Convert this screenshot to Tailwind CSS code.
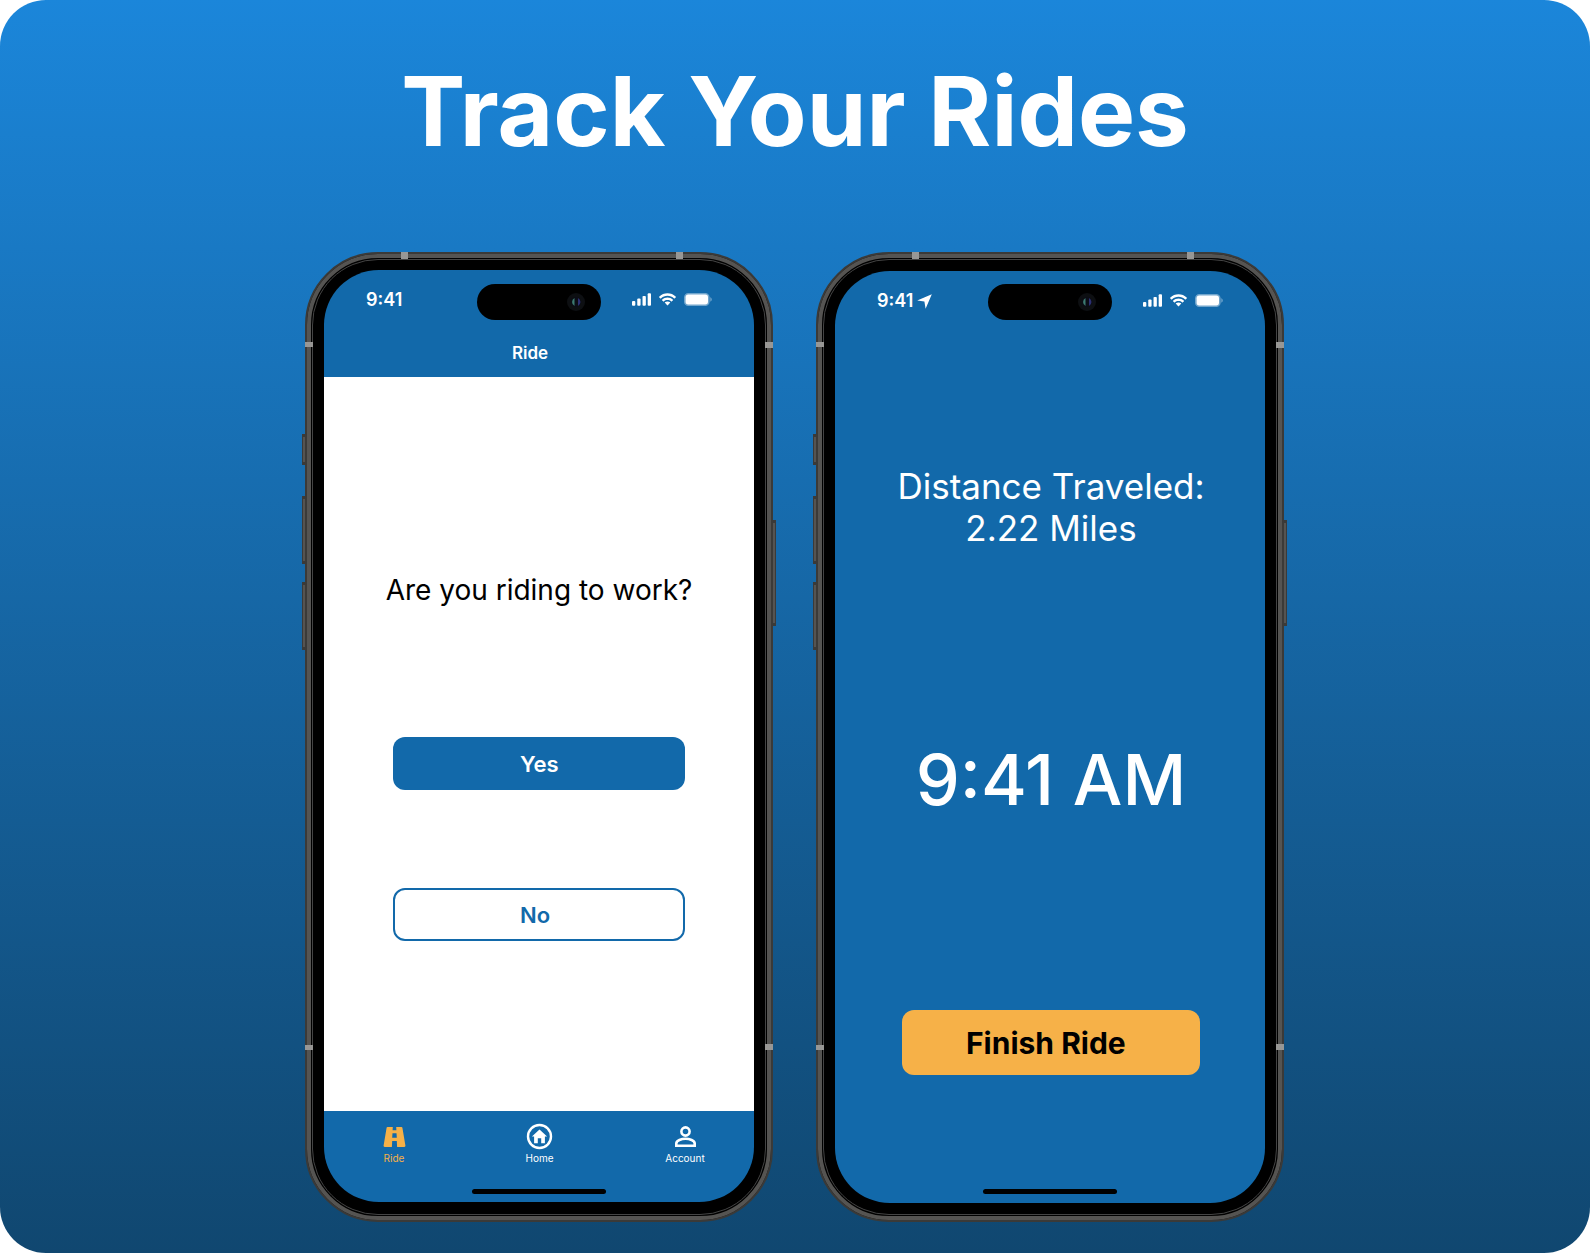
<!DOCTYPE html>
<html lang="en">
<head>
<meta charset="utf-8">
<meta name="viewport" content="width=device-width, initial-scale=1">
<title>Track Your Rides</title>
<script src="https://cdn.jsdelivr.net/npm/@tailwindcss/browser@4"></script>
</head>
<body class="bg-white font-['Inter',sans-serif]">
<svg class="hidden" aria-hidden="true">
  <symbol id="signal" viewBox="0 0 19.5 13">
    <rect x="0" y="8" width="3.4" height="4.800" rx="1"/><rect x="5.400" y="5.400" width="3.400" height="7.400" rx="1"/><rect x="10.800" y="2.800" width="3.400" height="10" rx="1"/><rect x="16.100" y="0" width="3.400" height="12.800" rx="1"/>
  </symbol>
  <symbol id="wifi" viewBox="0 0 17 12.5">
    <path d="M8.5 2.6c2.5 0 4.8.9 6.6 2.6.1.1.3.1.5 0l1.3-1.3c.2-.2.2-.4 0-.5C12.200-1.1 4.800-1.100.100 3.400c-.1.1-.1.3 0 .5l1.300 1.300c.1.1.300.1.500 0C3.700 3.500 6.000 2.600 8.500 2.600zM8.500 6.800c1.400 0 2.700.5 3.700 1.400.1.100.300.100.5 0l1.300-1.300c.1-.1.100-.4 0-.5-3.100-2.900-7.900-2.900-11 0-.1.100-.1.400 0 .5l1.300 1.300c.2.100.4.100.5 0 1-.9 2.300-1.400 3.700-1.400zM11.100 9.600c.100-.1.100-.3 0-.5-1.500-1.300-3.700-1.300-5.200 0-.1.200-.1.400 0 .5l2.300 2.500c.1.100.4.100.600 0z"/>
  </symbol>
  <symbol id="battery" viewBox="0 0 28 13">
    <path opacity=".4" d="M4.300 0h17a4.300 4.300 0 0 1 4.300 4.300v4.400a4.300 4.300 0 0 1-4.300 4.300h-17A4.300 4.300 0 0 1 0 8.700V4.300A4.300 4.300 0 0 1 4.300 0zM26.300 4.300v4.400c.9-.4 1.500-1.200 1.500-2.200s-.6-1.800-1.500-2.200z"/>
    <rect x="1.600" y="1.600" width="22.400" height="9.800" rx="2.600"/>
  </symbol>
</svg>

<main class="flex min-h-screen flex-col items-center rounded-[46px] bg-linear-to-b from-[#1b86da] to-[#104770] pt-[53px] pb-[31px]">
  <h1 class="text-center text-8xl leading-[116px] font-bold text-white">Track Your Rides</h1>

  <div class="mt-[83px] flex flex-wrap justify-center gap-[43px] pr-px">

    <section class="relative rounded-[73px] border-2 border-[#3b3a38] bg-black" aria-label="Ride question">
      <div class="rounded-[71px] border-4 border-[#555452] p-px">
        <div class="rounded-[66px] border border-[#444444] px-[11px] pt-[10px] pb-3">
          <div class="relative flex h-[932px] w-[430px] flex-col overflow-hidden rounded-[55px] bg-[#1269aa]">
            <header class="flex h-[107px] flex-col pt-[19px] font-semibold text-white">
              <div class="flex items-center justify-between px-[42px] text-lg leading-[22px]">
                <span>9:41</span>
                <span class="flex items-center gap-2 pb-0.5">
                  <svg class="h-[13px] w-[19px] fill-white"><use href="#signal"/></svg>
                  <svg class="h-[13px] w-[17px] fill-white"><use href="#wifi"/></svg>
                  <svg class="h-[13px] w-7 fill-white"><use href="#battery"/></svg>
                </span>
              </div>
              <h2 class="mt-8 pr-[18px] text-center text-[17px] leading-5">Ride</h2>
            </header>
            <div class="flex grow flex-col items-center bg-white pt-[196px]">
              <p class="text-[28px] leading-[34px] text-black">Are you riding to work?</p>
              <button type="button" class="mt-[130px] h-[53px] w-[292px] rounded-xl bg-[#1269aa] pt-0.5 pl-[127px] text-left text-[22px] font-semibold text-white">Yes</button>
              <button type="button" class="mt-[98px] h-[53px] w-[292px] rounded-xl border-2 border-[#1269aa] bg-white pt-0.5 pl-[125px] text-left text-[22px] font-semibold text-[#1269aa]">No</button>
            </div>
            <nav class="flex h-[91px] justify-between pr-[45px] pl-[46px] pt-3 text-[10px] leading-3 text-white">
              <a href="#ride" class="flex w-12 flex-col items-center gap-0.5 text-[#f6b148]">
                <svg class="h-[27px] w-[27px] fill-current" viewBox="0 0 27 27"><path fill-rule="evenodd" d="M6.500 4h5.300l-.2 3.200h3.800L15.200 4h5.300c.5 0 .8.300.900.800l3 17.800c.1.800-.3 1.400-1.100 1.400h-7.200l-.3-6h-4.600l-.3 6H3.700c-.8 0-1.200-.6-1.100-1.400L5.600 4.800c.1-.5.400-.8.900-.8zM11.500 10.300l-.3 4.500h4.600l-.3-4.500z"/></svg>
                <span>Ride</span>
              </a>
              <a href="#home" class="flex w-12 flex-col items-center gap-0.5">
                <svg class="h-[27px] w-[27px]" viewBox="0 0 27 27"><circle cx="13.500" cy="13.500" r="11.500" fill="none" stroke="currentColor" stroke-width="2.400"/><path fill="currentColor" d="M13.500 6.500l7.600 7h-2.200v6.700h-3.700v-5h-3.400v5H8.100v-6.700H5.900z"/></svg>
                <span>Home</span>
              </a>
              <a href="#account" class="flex w-12 flex-col items-center gap-0.5">
                <svg class="h-[27px] w-[27px]" viewBox="0 0 27 27" fill="none" stroke="currentColor" stroke-width="2.600"><circle cx="13.500" cy="8.500" r="4.100"/><path d="M4.300 22.700v-2.300c0-2.800 5.200-4.600 9.200-4.600s9.200 1.800 9.200 4.600v2.300z"/></svg>
                <span>Account</span>
              </a>
            </nav>
            <div class="absolute bottom-2 left-[148px] h-[5px] w-[134px] rounded-full bg-black"></div>
          </div>
        </div>
      </div>
      <svg class="pointer-events-none absolute -top-0.5 -left-0.5 h-[970px] w-[468px] overflow-visible"><use href="#hardware"/></svg>
    </section>

    <section class="relative rounded-[73px] border-2 border-[#3b3a38] bg-black" aria-label="Ride in progress">
      <div class="rounded-[71px] border-4 border-[#555452] p-px">
        <div class="rounded-[66px] border border-[#444444] px-[11px] py-[11px]">
          <div class="relative flex h-[932px] w-[430px] flex-col overflow-hidden rounded-[55px] bg-[#1269aa] pt-[19px] text-white">
            <div class="flex items-center justify-between px-[42px] text-lg leading-[22px] font-semibold">
              <span class="flex items-center gap-1">9:41
                <svg class="h-[15px] w-[15px] fill-white" viewBox="0 0 15 15"><path d="M14.800.200L8.600 14.800 7.400 7.600.200 6.400z"/></svg>
              </span>
              <span class="flex items-center gap-2 pb-0.5">
                <svg class="h-[13px] w-[19px] fill-white"><use href="#signal"/></svg>
                <svg class="h-[13px] w-[17px] fill-white"><use href="#wifi"/></svg>
                <svg class="h-[13px] w-7 fill-white"><use href="#battery"/></svg>
              </span>
            </div>
            <div class="flex flex-col items-center pt-[153px] pl-0.5">
              <p class="text-center text-[35px] leading-[42px]">Distance Traveled:<br>2.22 Miles</p>
              <p class="mt-[187px] text-[70px] leading-[88px] font-medium">9:41 AM</p>
              <button type="button" class="mt-[186px] h-[65px] w-[298px] rounded-xl bg-[#f6b148] pt-0.5 pl-16 text-left text-[30px] font-bold text-black">Finish Ride</button>
            </div>
            <div class="absolute bottom-[9px] left-[148px] h-[5px] w-[134px] rounded-full bg-black"></div>
          </div>
        </div>
      </div>
      <svg class="pointer-events-none absolute -top-0.5 -left-0.5 h-[970px] w-[468px] overflow-visible"><use href="#hardware"/></svg>
    </section>
  </div>
</main>

<svg class="hidden" aria-hidden="true">
  <defs>
    <g id="hardware">
      <!-- sensor island and camera -->
      <rect x="172" y="32" width="124" height="36" rx="18" fill="#000"/>
      <circle cx="271" cy="50" r="9" fill="#0d0f12"/>
      <circle cx="271" cy="50" r="5" fill="#0b0d16"/>
      <path d="M269.500 46a4.500 4.500 0 0 0 0 8z" fill="#3d7a70"/>
      <path d="M273 46a4.500 4.500 0 0 1 0 8z" fill="#2c2f72"/>
      <!-- antenna bands -->
      <g fill="#989795">
        <path d="M96 0h7v7h-7zM371 0h7v7h-7zM0 90h8v5H0zM460 90h8v6h-8zM0 793h8v5H0zM460 792h8v6h-8z"/>
      </g>
      <!-- side buttons -->
      <g fill="#3b3a38">
        <path d="M-3 182h3v31h-3zM-3 244h3v68h-3zM-3 330h3v68h-3zM468 268h3v106h-3z"/>
      </g>
      <g fill="#555452">
        <path d="M-2 185h2v25h-2zM-2 247h2v62h-2zM-2 333h2v62h-2zM468 271h2v100h-2z"/>
      </g>
    </g>
  </defs>
</svg>
</body>
</html>
